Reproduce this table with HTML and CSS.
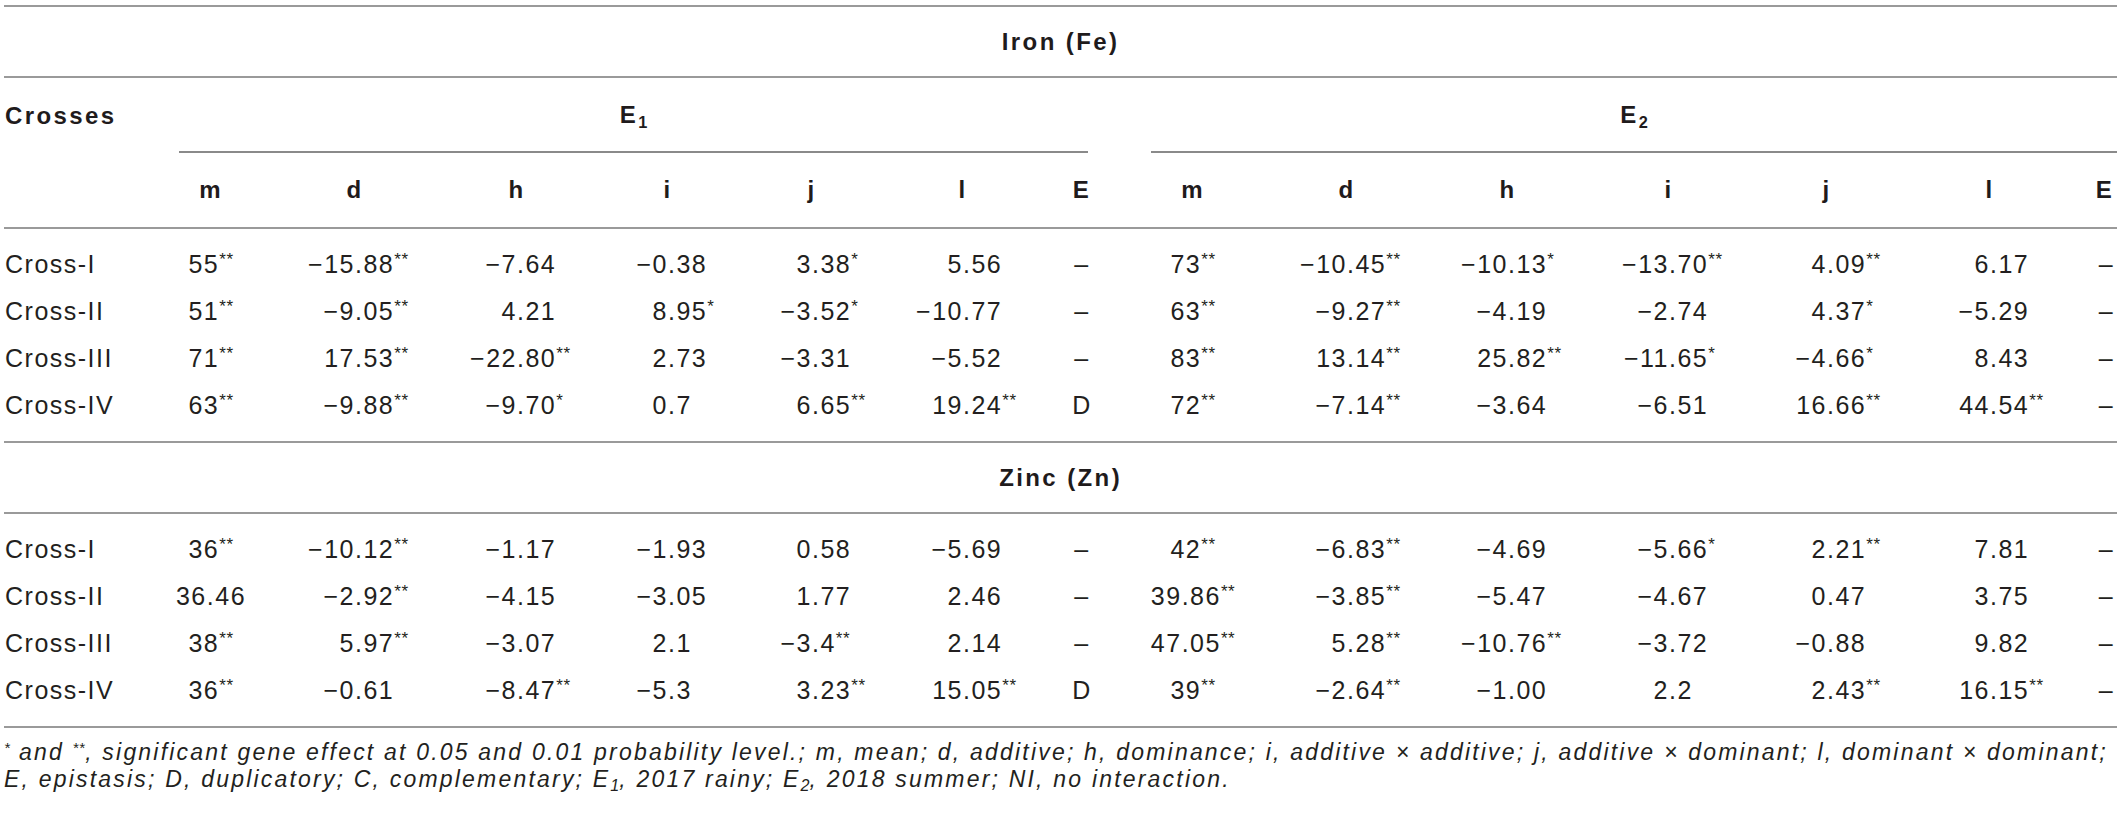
FILE: index.html
```html
<!DOCTYPE html>
<html lang="en">
<head>
<meta charset="utf-8">
<title>Gene effects for iron and zinc</title>
<link rel="stylesheet" href="styles.css">
</head>
<body>
<div class="page">
<table class="tbl">
  <colgroup>
    <col class="c-lab"><col class="c-m1"><col class="c-d1"><col class="c-h1"><col class="c-i1"><col class="c-j1"><col class="c-l1"><col class="c-e1">
    <col class="c-m2"><col class="c-d2"><col class="c-h2"><col class="c-i2"><col class="c-j2"><col class="c-l2"><col class="c-e2">
  </colgroup>
  <thead>
    <tr class="r-metal r-first"><th colspan="15" class="metal">Iron (Fe)</th></tr>
    <tr class="r-env">
      <th class="lab-h">Crosses</th>
      <th colspan="7" class="env"><div class="env-line env1">E<sub>1</sub></div></th>
      <th colspan="7" class="env"><div class="env-line env2">E<sub>2</sub></div></th>
    </tr>
    <tr class="r-param">
      <th></th><th>m</th><th>d</th><th>h</th><th>i</th><th>j</th><th>l</th><th>E</th>
      <th>m</th><th>d</th><th>h</th><th>i</th><th>j</th><th>l</th><th class="last">E</th>
    </tr>
  </thead>
  <tbody class="sec">
    <tr class="first">
      <td class="lab">Cross-I</td>
      <td class="c">55<sup>**</sup></td>
      <td class="n"><span class="w">−15</span><span class="p">.88<sup>**</sup></span></td>
      <td class="n"><span class="w">−7</span><span class="p">.64</span></td>
      <td class="n"><span class="w">−0</span><span class="p">.38</span></td>
      <td class="n"><span class="w">3</span><span class="p">.38<sup>*</sup></span></td>
      <td class="n"><span class="w">5</span><span class="p">.56</span></td>
      <td class="c">–</td>
      <td class="c">73<sup>**</sup></td>
      <td class="n"><span class="w">−10</span><span class="p">.45<sup>**</sup></span></td>
      <td class="n"><span class="w">−10</span><span class="p">.13<sup>*</sup></span></td>
      <td class="n"><span class="w">−13</span><span class="p">.70<sup>**</sup></span></td>
      <td class="n"><span class="w">4</span><span class="p">.09<sup>**</sup></span></td>
      <td class="n"><span class="w">6</span><span class="p">.17</span></td>
      <td class="c last">–</td>
    </tr>
    <tr>
      <td class="lab">Cross-II</td>
      <td class="c">51<sup>**</sup></td>
      <td class="n"><span class="w">−9</span><span class="p">.05<sup>**</sup></span></td>
      <td class="n"><span class="w">4</span><span class="p">.21</span></td>
      <td class="n"><span class="w">8</span><span class="p">.95<sup>*</sup></span></td>
      <td class="n"><span class="w">−3</span><span class="p">.52<sup>*</sup></span></td>
      <td class="n"><span class="w">−10</span><span class="p">.77</span></td>
      <td class="c">–</td>
      <td class="c">63<sup>**</sup></td>
      <td class="n"><span class="w">−9</span><span class="p">.27<sup>**</sup></span></td>
      <td class="n"><span class="w">−4</span><span class="p">.19</span></td>
      <td class="n"><span class="w">−2</span><span class="p">.74</span></td>
      <td class="n"><span class="w">4</span><span class="p">.37<sup>*</sup></span></td>
      <td class="n"><span class="w">−5</span><span class="p">.29</span></td>
      <td class="c last">–</td>
    </tr>
    <tr>
      <td class="lab">Cross-III</td>
      <td class="c">71<sup>**</sup></td>
      <td class="n"><span class="w">17</span><span class="p">.53<sup>**</sup></span></td>
      <td class="n"><span class="w">−22</span><span class="p">.80<sup>**</sup></span></td>
      <td class="n"><span class="w">2</span><span class="p">.73</span></td>
      <td class="n"><span class="w">−3</span><span class="p">.31</span></td>
      <td class="n"><span class="w">−5</span><span class="p">.52</span></td>
      <td class="c">–</td>
      <td class="c">83<sup>**</sup></td>
      <td class="n"><span class="w">13</span><span class="p">.14<sup>**</sup></span></td>
      <td class="n"><span class="w">25</span><span class="p">.82<sup>**</sup></span></td>
      <td class="n"><span class="w">−11</span><span class="p">.65<sup>*</sup></span></td>
      <td class="n"><span class="w">−4</span><span class="p">.66<sup>*</sup></span></td>
      <td class="n"><span class="w">8</span><span class="p">.43</span></td>
      <td class="c last">–</td>
    </tr>
    <tr class="final">
      <td class="lab">Cross-IV</td>
      <td class="c">63<sup>**</sup></td>
      <td class="n"><span class="w">−9</span><span class="p">.88<sup>**</sup></span></td>
      <td class="n"><span class="w">−9</span><span class="p">.70<sup>*</sup></span></td>
      <td class="n"><span class="w">0</span><span class="p">.7</span></td>
      <td class="n"><span class="w">6</span><span class="p">.65<sup>**</sup></span></td>
      <td class="n"><span class="w">19</span><span class="p">.24<sup>**</sup></span></td>
      <td class="c">D</td>
      <td class="c">72<sup>**</sup></td>
      <td class="n"><span class="w">−7</span><span class="p">.14<sup>**</sup></span></td>
      <td class="n"><span class="w">−3</span><span class="p">.64</span></td>
      <td class="n"><span class="w">−6</span><span class="p">.51</span></td>
      <td class="n"><span class="w">16</span><span class="p">.66<sup>**</sup></span></td>
      <td class="n"><span class="w">44</span><span class="p">.54<sup>**</sup></span></td>
      <td class="c last">–</td>
    </tr>
  </tbody>
  <tbody class="sec">
    <tr class="r-metal"><th colspan="15" class="metal">Zinc (Zn)</th></tr>
    <tr class="first">
      <td class="lab">Cross-I</td>
      <td class="c">36<sup>**</sup></td>
      <td class="n"><span class="w">−10</span><span class="p">.12<sup>**</sup></span></td>
      <td class="n"><span class="w">−1</span><span class="p">.17</span></td>
      <td class="n"><span class="w">−1</span><span class="p">.93</span></td>
      <td class="n"><span class="w">0</span><span class="p">.58</span></td>
      <td class="n"><span class="w">−5</span><span class="p">.69</span></td>
      <td class="c">–</td>
      <td class="c">42<sup>**</sup></td>
      <td class="n"><span class="w">−6</span><span class="p">.83<sup>**</sup></span></td>
      <td class="n"><span class="w">−4</span><span class="p">.69</span></td>
      <td class="n"><span class="w">−5</span><span class="p">.66<sup>*</sup></span></td>
      <td class="n"><span class="w">2</span><span class="p">.21<sup>**</sup></span></td>
      <td class="n"><span class="w">7</span><span class="p">.81</span></td>
      <td class="c last">–</td>
    </tr>
    <tr>
      <td class="lab">Cross-II</td>
      <td class="c">36.46</td>
      <td class="n"><span class="w">−2</span><span class="p">.92<sup>**</sup></span></td>
      <td class="n"><span class="w">−4</span><span class="p">.15</span></td>
      <td class="n"><span class="w">−3</span><span class="p">.05</span></td>
      <td class="n"><span class="w">1</span><span class="p">.77</span></td>
      <td class="n"><span class="w">2</span><span class="p">.46</span></td>
      <td class="c">–</td>
      <td class="c">39.86<sup>**</sup></td>
      <td class="n"><span class="w">−3</span><span class="p">.85<sup>**</sup></span></td>
      <td class="n"><span class="w">−5</span><span class="p">.47</span></td>
      <td class="n"><span class="w">−4</span><span class="p">.67</span></td>
      <td class="n"><span class="w">0</span><span class="p">.47</span></td>
      <td class="n"><span class="w">3</span><span class="p">.75</span></td>
      <td class="c last">–</td>
    </tr>
    <tr>
      <td class="lab">Cross-III</td>
      <td class="c">38<sup>**</sup></td>
      <td class="n"><span class="w">5</span><span class="p">.97<sup>**</sup></span></td>
      <td class="n"><span class="w">−3</span><span class="p">.07</span></td>
      <td class="n"><span class="w">2</span><span class="p">.1</span></td>
      <td class="n"><span class="w">−3</span><span class="p">.4<sup>**</sup></span></td>
      <td class="n"><span class="w">2</span><span class="p">.14</span></td>
      <td class="c">–</td>
      <td class="c">47.05<sup>**</sup></td>
      <td class="n"><span class="w">5</span><span class="p">.28<sup>**</sup></span></td>
      <td class="n"><span class="w">−10</span><span class="p">.76<sup>**</sup></span></td>
      <td class="n"><span class="w">−3</span><span class="p">.72</span></td>
      <td class="n"><span class="w">−0</span><span class="p">.88</span></td>
      <td class="n"><span class="w">9</span><span class="p">.82</span></td>
      <td class="c last">–</td>
    </tr>
    <tr class="final">
      <td class="lab">Cross-IV</td>
      <td class="c">36<sup>**</sup></td>
      <td class="n"><span class="w">−0</span><span class="p">.61</span></td>
      <td class="n"><span class="w">−8</span><span class="p">.47<sup>**</sup></span></td>
      <td class="n"><span class="w">−5</span><span class="p">.3</span></td>
      <td class="n"><span class="w">3</span><span class="p">.23<sup>**</sup></span></td>
      <td class="n"><span class="w">15</span><span class="p">.05<sup>**</sup></span></td>
      <td class="c">D</td>
      <td class="c">39<sup>**</sup></td>
      <td class="n"><span class="w">−2</span><span class="p">.64<sup>**</sup></span></td>
      <td class="n"><span class="w">−1</span><span class="p">.00</span></td>
      <td class="n"><span class="w">2</span><span class="p">.2</span></td>
      <td class="n"><span class="w">2</span><span class="p">.43<sup>**</sup></span></td>
      <td class="n"><span class="w">16</span><span class="p">.15<sup>**</sup></span></td>
      <td class="c last">–</td>
    </tr>
  </tbody>
</table>
<p class="note"><sup>*</sup> and <sup>**</sup>, significant gene effect at 0.05 and 0.01 probability level.; m, mean; d, additive; h, dominance; i, additive × additive; j, additive × dominant; l, dominant × dominant;<br>E, epistasis; D, duplicatory; C, complementary; E<sub>1</sub>, 2017 rainy; E<sub>2</sub>, 2018 summer; NI, no interaction.</p>
</div>
</body>
</html>
```

FILE: styles.css
```css
* { box-sizing: border-box; }
html, body { margin: 0; background: #ffffff; }
body {
  font-family: "Liberation Sans", Arial, sans-serif;
  color: #231f20;
}
.page { padding: 5px 3px 0 4px; }

.tbl {
  width: 2113px;
  table-layout: fixed;
  border-collapse: separate;
  border-spacing: 0;
  font-size: 25px;
  letter-spacing: 1.5px;
}
.c-lab { width: 166px; }
.c-m1 { width: 82px; }
.c-d1 { width: 206px; }
.c-h1 { width: 118px; }
.c-i1 { width: 184px; }
.c-j1 { width: 104px; }
.c-l1 { width: 198px; }
.c-e1 { width: 40px; }
.c-m2 { width: 182px; }
.c-d2 { width: 126px; }
.c-h2 { width: 196px; }
.c-i2 { width: 126px; }
.c-j2 { width: 190px; }
.c-l2 { width: 136px; }
.c-e2 { width: 59px; }

th, td { padding: 0; white-space: nowrap; }
th { font-weight: bold; font-size: 24px; letter-spacing: 2.4px; color: #1f1b1c; }

.metal {
  line-height: 69px;
  text-align: center;
  border-bottom: 2px solid #9a9a9a;
}
.r-first .metal { border-top: 2px solid #9a9a9a; }

.r-env th { line-height: 75px; vertical-align: top; }
.lab-h { text-align: left; padding-left: 1px; }
.env-line {
  line-height: 73px;
  text-align: center;
  border-bottom: 2px solid #8a8a8a;
}
.env1 { margin: 0 14px 0 9px; }
.env2 { margin: 0 0 0 49px; }

.r-param th {
  line-height: 74px;
  text-align: center;
  border-bottom: 2px solid #9a9a9a;
}
.r-param th.last { text-align: right; padding-right: 3px; }

sub {
  font-size: 0.68em;
  line-height: 0;
  vertical-align: -0.28em;
  letter-spacing: 0;
}
sup {
  font-size: 17px;
  line-height: 0;
  vertical-align: 0.48em;
  letter-spacing: 0.5px;
}

.sec td { line-height: 47px; font-weight: normal; }
.sec tr.first td { padding-top: 12px; }
.sec tr.final td { padding-bottom: 12px; border-bottom: 2px solid #9a9a9a; }

.lab { text-align: left; padding-left: 1px; }
.c { text-align: center; }
td.last { text-align: right; padding-right: 3px; }

.w, .p { display: inline-block; width: 50%; }
.w { text-align: right; }
.p { text-align: left; }

.note {
  margin: 0;
  padding: 11px 0 0 0;
  font-style: italic;
  font-size: 23px;
  line-height: 27px;
  letter-spacing: 2.2px;
  color: #231f20;
  white-space: nowrap;
}
.note sup { font-size: 15px; vertical-align: 0.45em; }
.note sub { font-size: 0.7em; vertical-align: -0.25em; }
```
